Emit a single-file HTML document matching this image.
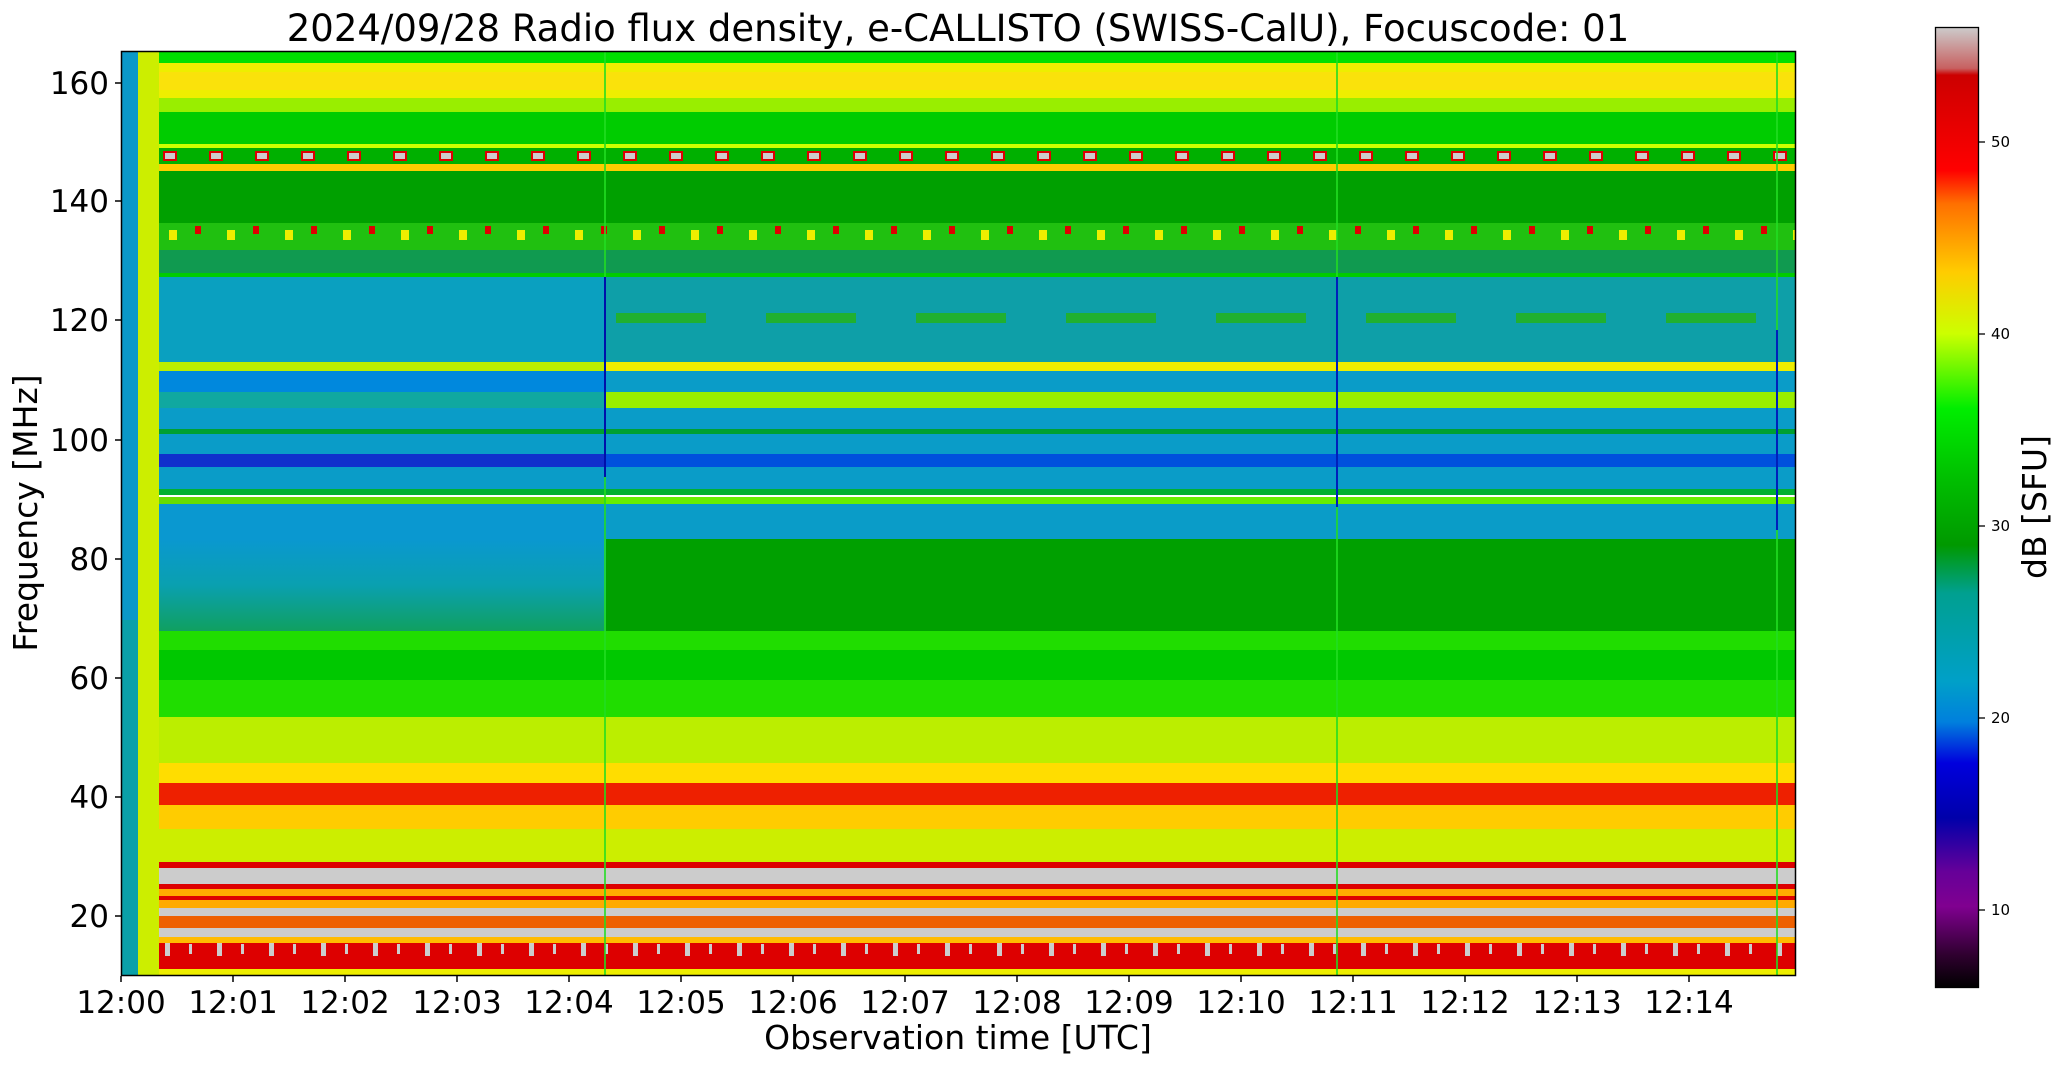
<!DOCTYPE html>
<html><head><meta charset="utf-8"><style>
html,body{margin:0;padding:0;background:#fff;width:2062px;height:1067px;overflow:hidden}
svg text{font-family:"DejaVu Sans","Liberation Sans",sans-serif;fill:#000}
</style></head><body>
<svg width="2062" height="1067" viewBox="0 0 2062 1067" xmlns="http://www.w3.org/2000/svg">
<defs>
<linearGradient id="cb" x1="0" y1="0" x2="0" y2="1">
<stop offset="0" stop-color="#cccccc"/><stop offset="0.043" stop-color="#c86060"/><stop offset="0.05" stop-color="#cc0000"/>
<stop offset="0.149" stop-color="#ff0000"/><stop offset="0.184" stop-color="#ff7000"/><stop offset="0.255" stop-color="#ffcc00"/>
<stop offset="0.319" stop-color="#ccff00"/><stop offset="0.397" stop-color="#00ee00"/><stop offset="0.468" stop-color="#00c000"/>
<stop offset="0.539" stop-color="#009900"/><stop offset="0.589" stop-color="#00a090"/><stop offset="0.681" stop-color="#00a0c8"/>
<stop offset="0.723" stop-color="#0080dd"/><stop offset="0.766" stop-color="#0000dd"/><stop offset="0.823" stop-color="#0000aa"/>
<stop offset="0.879" stop-color="#660099"/><stop offset="0.915" stop-color="#800090"/><stop offset="0.965" stop-color="#300030"/>
<stop offset="1" stop-color="#000000"/></linearGradient>
<pattern id="boxes" x="159" y="0" width="46" height="1067" patternUnits="userSpaceOnUse">
<rect x="4" y="151" width="14" height="10" fill="#dd0000"/><rect x="6" y="153" width="10" height="6" fill="#cccccc"/>
</pattern>
<pattern id="spots" x="159" y="0" width="58" height="1067" patternUnits="userSpaceOnUse">
<rect x="10" y="230" width="8" height="10" fill="#eeee00"/><rect x="36" y="226" width="6" height="8" fill="#dd0000"/>
</pattern>
<pattern id="gd" x="159" y="0" width="52" height="1067" patternUnits="userSpaceOnUse">
<rect x="6" y="942" width="5" height="14" fill="#cccccc"/><rect x="30" y="944" width="3" height="10" fill="#cccccc"/>
</pattern>
<pattern id="dash" x="606" y="0" width="150" height="1067" patternUnits="userSpaceOnUse">
<rect x="10" y="313" width="90" height="10" fill="#20b030"/>
</pattern>
<linearGradient id="lt" x1="0" y1="0" x2="0" y2="1">
<stop offset="0" stop-color="#0a98d0"/><stop offset="0.5" stop-color="#0aa0b0"/><stop offset="1" stop-color="#10a060"/>
</linearGradient>
</defs>

<g>
<rect x="159" y="51" width="1637" height="12" fill="#00e000"/>
<rect x="159" y="63" width="1637" height="35" fill="#eeee00"/>
<rect x="159" y="72" width="1637" height="18" fill="#ffdd10" opacity="0.7"/>
<rect x="159" y="98" width="1637" height="14" fill="#99ee00"/>
<rect x="159" y="112" width="1637" height="32" fill="#00cc00"/>
<rect x="159" y="144" width="1637" height="4" fill="#ccff00"/>
<rect x="159" y="148" width="1637" height="16" fill="#00b000"/>
<rect x="159" y="148" width="1637" height="16" fill="url(#boxes)"/>
<rect x="159" y="164" width="1637" height="7" fill="#ffcc00"/>
<rect x="159" y="171" width="1637" height="52" fill="#00a000"/>
<rect x="159" y="223" width="1637" height="27" fill="#20c010"/>
<rect x="159" y="223" width="1637" height="27" fill="url(#spots)"/>
<rect x="159" y="250" width="1637" height="26" fill="#109a50"/>
<rect x="159" y="273" width="1637" height="4" fill="#00cc00"/>
<rect x="159" y="277" width="447" height="85" fill="#0aa0c0"/>
<rect x="159" y="362" width="447" height="9" fill="#bbee00"/>
<rect x="159" y="371" width="447" height="21" fill="#0088dd"/>
<rect x="159" y="392" width="447" height="16" fill="#10a8a0"/>
<rect x="159" y="408" width="447" height="21" fill="#0a9cc8"/>
<rect x="159" y="429" width="447" height="5" fill="#00a030"/>
<rect x="159" y="434" width="447" height="20" fill="#0a9cc8"/>
<rect x="159" y="454" width="447" height="13" fill="#1030cc"/>
<rect x="159" y="467" width="447" height="22" fill="#0a9cc8"/>
<rect x="159" y="489" width="447" height="6" fill="#00b030"/>
<rect x="159" y="497" width="447" height="7" fill="#66dd00"/>
<rect x="159" y="504" width="447" height="35" fill="#0a98d0"/>
<rect x="159" y="539" width="447" height="92" fill="url(#lt)"/>
<rect x="606" y="277" width="1190" height="85" fill="#0e9fa8"/>
<rect x="606" y="277" width="1190" height="85" fill="url(#dash)"/>
<rect x="606" y="362" width="1190" height="9" fill="#eeee00"/>
<rect x="606" y="371" width="1190" height="21" fill="#0a9cc8"/>
<rect x="606" y="392" width="1190" height="16" fill="#99ee00"/>
<rect x="606" y="408" width="1190" height="21" fill="#0a9cc8"/>
<rect x="606" y="429" width="1190" height="5" fill="#00a030"/>
<rect x="606" y="434" width="1190" height="20" fill="#0a9cc8"/>
<rect x="606" y="454" width="1190" height="13" fill="#0050dd"/>
<rect x="606" y="467" width="1190" height="22" fill="#0a9cc8"/>
<rect x="606" y="489" width="1190" height="6" fill="#00b030"/>
<rect x="606" y="497" width="1190" height="7" fill="#66ee00"/>
<rect x="606" y="504" width="1190" height="35" fill="#0a9cc8"/>
<rect x="606" y="539" width="1190" height="92" fill="#00a000"/>
<rect x="159" y="631" width="1637" height="86" fill="#20dd00"/>
<rect x="159" y="650" width="1637" height="30" fill="#00c800"/>
<rect x="159" y="717" width="1637" height="46" fill="#bbee00"/>
<rect x="159" y="763" width="1637" height="20" fill="#ffdd00"/>
<rect x="159" y="783" width="1637" height="22" fill="#ee2000"/>
<rect x="159" y="805" width="1637" height="24" fill="#ffcc00"/>
<rect x="159" y="829" width="1637" height="33" fill="#ccee00"/>
<rect x="159" y="862" width="1637" height="6" fill="#dd0000"/>
<rect x="159" y="868" width="1637" height="16" fill="#cccccc"/>
<rect x="159" y="884" width="1637" height="5" fill="#dd0000"/>
<rect x="159" y="889" width="1637" height="19" fill="#ffaa00"/>
<rect x="159" y="896" width="1637" height="4" fill="#dd0000"/>
<rect x="159" y="908" width="1637" height="8" fill="#cccccc"/>
<rect x="159" y="916" width="1637" height="12" fill="#ee6000"/>
<rect x="159" y="928" width="1637" height="9" fill="#cccccc"/>
<rect x="159" y="937" width="1637" height="6" fill="#ffbb00"/>
<rect x="159" y="943" width="1637" height="26" fill="#dd0000"/>
<rect x="159" y="943" width="1637" height="26" fill="url(#gd)"/>
<rect x="159" y="969" width="1637" height="7" fill="#eeee00"/>
</g>
<rect x="121" y="51" width="17" height="925" fill="#0a98c8"/>
<rect x="121" y="620" width="17" height="356" fill="#0aa0a8"/>
<rect x="138" y="51" width="21" height="925" fill="#ccee00"/>
<rect x="604" y="51" width="2" height="925" fill="#22dd22" opacity="0.8"/>
<rect x="604" y="277" width="2" height="200" fill="#0010aa"/>
<rect x="1336" y="51" width="2" height="925" fill="#22dd22" opacity="0.8"/>
<rect x="1336" y="277" width="2" height="230" fill="#0020bb"/>
<rect x="1776" y="51" width="2" height="925" fill="#22dd22" opacity="0.8"/>
<rect x="1776" y="330" width="2" height="200" fill="#0020bb"/>
<rect x="121.5" y="51.5" width="1674" height="924" fill="none" stroke="#000" stroke-width="1.5"/>

<g stroke="#000" stroke-width="1.5">
<line x1="115" y1="83" x2="121" y2="83"/><line x1="115" y1="201" x2="121" y2="201"/>
<line x1="115" y1="320" x2="121" y2="320"/><line x1="115" y1="440" x2="121" y2="440"/>
<line x1="115" y1="559" x2="121" y2="559"/><line x1="115" y1="678" x2="121" y2="678"/>
<line x1="115" y1="797" x2="121" y2="797"/><line x1="115" y1="916" x2="121" y2="916"/>
</g>
<g font-size="31" text-anchor="end">
<text x="109" y="94">160</text><text x="109" y="212">140</text><text x="109" y="331">120</text>
<text x="109" y="451">100</text><text x="109" y="570">80</text><text x="109" y="689">60</text>
<text x="109" y="808">40</text><text x="109" y="927">20</text>
</g>
<g stroke="#000" stroke-width="1.5">
<line x1="121" y1="976" x2="121" y2="982"/><line x1="233" y1="976" x2="233" y2="982"/><line x1="345" y1="976" x2="345" y2="982"/>
<line x1="457" y1="976" x2="457" y2="982"/><line x1="569" y1="976" x2="569" y2="982"/><line x1="681" y1="976" x2="681" y2="982"/>
<line x1="793" y1="976" x2="793" y2="982"/><line x1="905" y1="976" x2="905" y2="982"/><line x1="1017" y1="976" x2="1017" y2="982"/>
<line x1="1129" y1="976" x2="1129" y2="982"/><line x1="1241" y1="976" x2="1241" y2="982"/><line x1="1353" y1="976" x2="1353" y2="982"/>
<line x1="1465" y1="976" x2="1465" y2="982"/><line x1="1577" y1="976" x2="1577" y2="982"/><line x1="1689" y1="976" x2="1689" y2="982"/>
</g>
<g font-size="31" text-anchor="middle">
<text x="121" y="1013">12:00</text><text x="233" y="1013">12:01</text><text x="345" y="1013">12:02</text>
<text x="457" y="1013">12:03</text><text x="569" y="1013">12:04</text><text x="681" y="1013">12:05</text>
<text x="793" y="1013">12:06</text><text x="905" y="1013">12:07</text><text x="1017" y="1013">12:08</text>
<text x="1129" y="1013">12:09</text><text x="1241" y="1013">12:10</text><text x="1353" y="1013">12:11</text>
<text x="1465" y="1013">12:12</text><text x="1577" y="1013">12:13</text><text x="1689" y="1013">12:14</text>
</g>
<text x="958" y="1049" font-size="33" text-anchor="middle">Observation time [UTC]</text>
<text transform="translate(37,513) rotate(-90)" font-size="33" text-anchor="middle">Frequency [MHz]</text>
<text x="958" y="41" font-size="37" text-anchor="middle">2024/09/28  Radio flux density, e-CALLISTO (SWISS-CalU), Focuscode: 01</text>

<rect x="1935" y="27" width="44" height="961" fill="url(#cb)"/>
<rect x="1935.5" y="27.5" width="43" height="960" fill="none" stroke="#000" stroke-width="1.3"/>
<g stroke="#000" stroke-width="1.3">
<line x1="1979" y1="142" x2="1985" y2="142"/><line x1="1979" y1="334" x2="1985" y2="334"/>
<line x1="1979" y1="526" x2="1985" y2="526"/><line x1="1979" y1="718" x2="1985" y2="718"/>
<line x1="1979" y1="910" x2="1985" y2="910"/>
</g>
<g font-size="15">
<text x="1991" y="147">50</text><text x="1991" y="339">40</text><text x="1991" y="531">30</text>
<text x="1991" y="723">20</text><text x="1991" y="915">10</text>
</g>
<text transform="translate(2046,507) rotate(-90)" font-size="33" text-anchor="middle">dB [SFU]</text>
</svg>
</body></html>
